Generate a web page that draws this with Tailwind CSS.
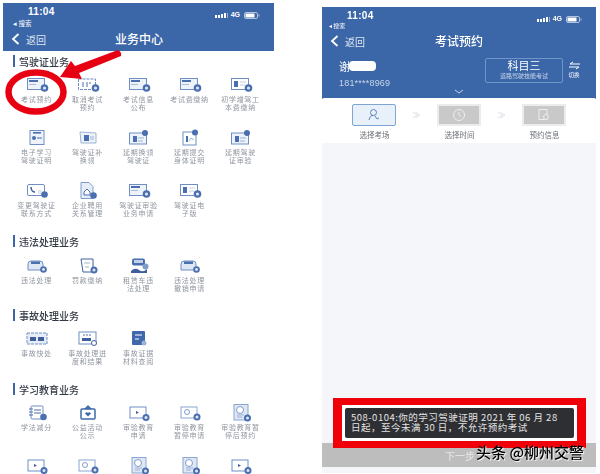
<!DOCTYPE html>
<html lang="zh">
<head>
  <meta charset="UTF-8">
  <title>业务中心</title>
  <script src="https://cdn.jsdelivr.net/npm/@tailwindcss/browser@4"></script>
</head>
<body class="bg-white">
  <svg class="hidden">
    <symbol id="card" viewBox="0 0 24 19"><rect x="2.5" y="2.5" width="17" height="11" fill="#eef3fa" stroke="#6f8fc4"/><rect x="4" y="4" width="9" height="2" fill="#4a6fb0"/><rect x="4" y="8" width="7" height="1" fill="#a9bcdc"/><circle cx="19.5" cy="12" r="3.8" fill="#4a6fb0"/><circle cx="19.5" cy="12" r="1.6" fill="#dfe7f4"/></symbol>
    <symbol id="cal" viewBox="0 0 24 19"><rect x="2.5" y="3" width="17" height="10.5" fill="#fff" stroke="#6f8fc4" stroke-dasharray="3 1"/><path d="M7 6v5M11 6v5M15 7h-2" stroke="#4a6fb0"/><circle cx="19.5" cy="12" r="3.8" fill="#4a6fb0"/><circle cx="19.5" cy="12" r="1.6" fill="#dfe7f4"/></symbol>
    <symbol id="id" viewBox="0 0 24 19"><rect x="2.5" y="2.5" width="17" height="11" fill="#fff" stroke="#6f8fc4"/><rect x="5" y="5" width="4" height="6" fill="#4a6fb0"/><path d="M11 6h6M11 9h5" stroke="#c3d0e6"/><circle cx="19.5" cy="12" r="3.8" fill="#4a6fb0"/><circle cx="19.5" cy="12" r="1.6" fill="#dfe7f4"/></symbol>
    <symbol id="doc" viewBox="0 0 24 19"><rect x="5" y="1.5" width="14" height="14" fill="#eef3fa" stroke="#6f8fc4"/><rect x="8" y="3" width="8" height="1.6" fill="#4a6fb0"/><circle cx="9" cy="9" r="2" fill="#4a6fb0"/><path d="M12 9h5" stroke="#4a6fb0"/></symbol>
    <symbol id="open" viewBox="0 0 24 19"><path d="M4 3l16 1v10H5z" fill="#eef3fa" stroke="#9db3d6"/><rect x="8" y="6" width="5" height="6" fill="#4a6fb0"/><path d="M14 8h4M14 10h4" stroke="#9db3d6"/></symbol>
    <symbol id="idtop" viewBox="0 0 24 19"><rect x="2.5" y="4" width="17" height="11" fill="#eef3fa" stroke="#6f8fc4"/><rect x="6" y="7" width="4" height="6" fill="#4a6fb0"/><path d="M11 9h6M11 12h5" stroke="#9db3d6"/><circle cx="18" cy="4" r="3" fill="#4a6fb0"/></symbol>
    <symbol id="paper" viewBox="0 0 24 19"><rect x="5" y="3" width="13" height="13" fill="#fff" stroke="#6f8fc4"/><rect x="8" y="7" width="2" height="6" fill="#4a6fb0"/><path d="M11 12l2-3 3 2" fill="none" stroke="#9db3d6"/><circle cx="17" cy="3.5" r="3" fill="#4a6fb0"/></symbol>
    <symbol id="phone" viewBox="0 0 24 19"><rect x="2.5" y="2.5" width="17" height="11" rx="1.5" fill="#fff" stroke="#6f8fc4"/><path d="M6 5c0 3 2 5 4 5" fill="none" stroke="#3f5f9c" stroke-width="1.6"/><path d="M13 9h4M13 11h3" stroke="#c3d0e6"/><circle cx="19.5" cy="12.5" r="3.3" fill="#4a6fb0"/></symbol>
    <symbol id="house" viewBox="0 0 24 19"><path d="M5 .5h8l4 4v12H5z" fill="#e6edf7" stroke="#7f9dcb"/><path d="M8 10l3-3 3 3v3H8z" fill="#fff" stroke="#4a6fb0"/><circle cx="17.5" cy="13.5" r="3.3" fill="#4a6fb0"/></symbol>
    <symbol id="car" viewBox="0 0 24 19"><path d="M3 7q0-3 3-3h9q3 0 3 3v6H3z" fill="#dfe7f4" stroke="#6f8fc4"/><rect x="6" y="4.5" width="9" height="2.5" fill="#4a6fb0"/><circle cx="18.5" cy="12.5" r="3.3" fill="#4a6fb0"/><circle cx="18.5" cy="12.5" r="1.4" fill="#dfe7f4"/></symbol>
    <symbol id="bill" viewBox="0 0 24 19"><path d="M5 2h12v13H7z" fill="#fff" stroke="#3f5f9c"/><path d="M8 6h6M9 10h4" stroke="#9db3d6"/><circle cx="18" cy="13" r="3.5" fill="#4a6fb0"/><circle cx="18" cy="13" r="1.5" fill="#dfe7f4"/></symbol>
    <symbol id="taxi" viewBox="0 0 24 19"><rect x="5" y="1.5" width="13" height="7" rx="2" fill="#4a6fb0"/><rect x="7" y="3" width="9" height="3" fill="#c3d0e6"/><path d="M4 14q4-4 8-1t8-1v4H4z" fill="#3f5f9c"/><circle cx="18.5" cy="9.5" r="3" fill="#7f9dcb"/></symbol>
    <symbol id="fast" viewBox="0 0 24 19"><rect x="2" y="3" width="20" height="11" fill="#e6edf7" stroke="#6f8fc4" stroke-dasharray="3 1"/><rect x="5" y="7" width="6" height="4" fill="#3f5f9c"/><rect x="13" y="7" width="6" height="4" fill="#3f5f9c"/></symbol>
    <symbol id="search" viewBox="0 0 24 19"><rect x="3" y="2" width="17" height="12" fill="#fff" stroke="#6f8fc4"/><path d="M7 5h8" stroke="#4a6fb0" stroke-dasharray="2 1"/><rect x="6" y="8" width="9" height="3" fill="#3f5f9c"/><circle cx="18" cy="13" r="2.5" fill="#fff" stroke="#3f5f9c"/></symbol>
    <symbol id="file" viewBox="0 0 24 19"><rect x="5" y="1" width="13" height="14" rx="1" fill="#3f68ad"/><path d="M8 5h7M8 9h4" stroke="#fff"/><circle cx="17" cy="13" r="2.5" fill="#9db3d6"/></symbol>
    <symbol id="note" viewBox="0 0 24 19"><rect x="6" y="2" width="12" height="13" rx="1" fill="#fff" stroke="#6f8fc4"/><path d="M4 5h4M4 8h4M4 11h4M9 6h7M9 9h7" stroke="#4a6fb0"/><circle cx="18.5" cy="13" r="3.3" fill="#4a6fb0"/></symbol>
    <symbol id="heart" viewBox="0 0 24 19"><path d="M12 1l4 4H8z" fill="#4a6fb0"/><rect x="5" y="5" width="14" height="10" rx="1" fill="#fff" stroke="#3f68ad" stroke-width="1.5"/><path d="M12 12.5L9 9.5q1.5-2 3-.5 1.5-1.500 3 .5z" fill="#3f68ad"/></symbol>
    <symbol id="tape" viewBox="0 0 24 19"><rect x="3" y="3" width="16" height="11" fill="#fff" stroke="#8aa5cf"/><circle cx="9" cy="8" r="2.5" fill="none" stroke="#7f9dcb"/><circle cx="19" cy="13" r="3.5" fill="#4a6fb0"/><circle cx="19" cy="13" r="1.5" fill="#dfe7f4"/></symbol>
    <symbol id="disc" viewBox="0 0 24 19"><rect x="5" y="0.5" width="14" height="15.5" fill="#dfe7f4" stroke="#8aa5cf"/><circle cx="11" cy="6" r="3.5" fill="#fff" stroke="#7f9dcb"/><path d="M8 11h7M8 13h5" stroke="#9db3d6"/><circle cx="18.5" cy="14" r="3.5" fill="#4a6fb0"/><circle cx="18.5" cy="14" r="1.5" fill="#dfe7f4"/></symbol>
    <symbol id="play" viewBox="0 0 24 19"><rect x="3" y="3" width="16" height="11" fill="#fff" stroke="#6f8fc4"/><path d="M9 7l3 1.5-3 1.5z" fill="#3f5f9c"/><circle cx="19" cy="13.5" r="3.5" fill="#4a6fb0"/><circle cx="19" cy="13.5" r="1.5" fill="#dfe7f4"/></symbol>
    <symbol id="signal" viewBox="0 0 13 7"><path d="M1 3v3M4 3v3M7 2v4M10 1v5" stroke="white" stroke-width="2"/><path d="M12.500 1v5" stroke="white" stroke-opacity=".5"/></symbol>
    <symbol id="battery" viewBox="0 0 16 7"><rect x=".5" y=".5" width="13" height="6" rx="1.500" fill="none" stroke="white" stroke-opacity=".6"/><rect x="1.500" y="1.500" width="9" height="4" fill="white"/><path d="M15 2.500v2" stroke="white" stroke-opacity=".6"/></symbol>
  </svg>

  <div class="relative flex w-[600px] h-[474px] overflow-hidden blur-[0.6px] font-['Noto_Sans_CJK_SC','Liberation_Sans',sans-serif]">
    <!-- left phone -->
    <div class="w-[271px] ml-[3px] mt-[3px] shrink-0">
      <div class="h-[48px] bg-[#3b67a8] text-white relative">
        <div class="flex justify-between h-[24px] pl-[25px] pr-[14px]">
          <div>
            <p class="text-[10px] leading-[18px] font-bold tracking-[0.3px] font-['Liberation_Sans',sans-serif]">11:04</p>
            <p class="text-[6.5px] leading-[4px] -ml-[15px]">◂ 搜索</p>
          </div>
          <div class="flex items-center gap-[3px] h-[24px]">
            <svg class="w-[13px] h-[7px]"><use href="#signal"/></svg>
            <span class="text-[7px] font-bold font-['Liberation_Sans',sans-serif]">4G</span>
            <svg class="w-[16px] h-[7px] ml-[1px]"><use href="#battery"/></svg>
          </div>
        </div>
        <div class="relative flex items-center h-[24px] pl-[8px]">
          <svg class="w-[9px] h-[12px]" viewBox="0 0 9 12"><path d="M7.500 1L2 6l5.500 5" fill="none" stroke="white" stroke-width="1.800"/></svg>
          <span class="ml-[6px] text-[10px] text-[#dfe6f2]">返回</span>
          <span class="absolute left-[112px] text-[12px] font-medium">业务中心</span>
        </div>
      </div>

      <h2 class="mt-[4px] h-[12px] flex items-center border-l-2 border-[#3b67a8] ml-[10px] pl-[4px] text-[10px] font-medium text-[#333a45]">驾驶证业务</h2>
      <div class="grid grid-cols-[repeat(5,51px)] auto-rows-[53px] mt-[9px] ml-[8px] text-center text-[7px] tracking-[0.7px] leading-[8px] text-[#8f959f]">
        <div class="flex flex-col items-center"><svg class="w-[24px] h-[19px]"><use href="#card"/></svg><p>考试预约</p></div>
        <div class="flex flex-col items-center"><svg class="w-[24px] h-[19px]"><use href="#cal"/></svg><p>取消考试<br>预约</p></div>
        <div class="flex flex-col items-center"><svg class="w-[24px] h-[19px]"><use href="#card"/></svg><p>考试信息<br>公布</p></div>
        <div class="flex flex-col items-center"><svg class="w-[24px] h-[19px]"><use href="#card"/></svg><p>考试费缴纳</p></div>
        <div class="flex flex-col items-center"><svg class="w-[24px] h-[19px]"><use href="#id"/></svg><p>初学增驾工<br>本费缴纳</p></div>
        <div class="flex flex-col items-center"><svg class="w-[24px] h-[19px]"><use href="#doc"/></svg><p>电子学习<br>驾驶证明</p></div>
        <div class="flex flex-col items-center"><svg class="w-[24px] h-[19px]"><use href="#open"/></svg><p>驾驶证补<br>换领</p></div>
        <div class="flex flex-col items-center"><svg class="w-[24px] h-[19px]"><use href="#idtop"/></svg><p>延期换领<br>驾驶证</p></div>
        <div class="flex flex-col items-center"><svg class="w-[24px] h-[19px]"><use href="#paper"/></svg><p>延期提交<br>身体证明</p></div>
        <div class="flex flex-col items-center"><svg class="w-[24px] h-[19px]"><use href="#idtop"/></svg><p>延期驾驶<br>证审验</p></div>
        <div class="flex flex-col items-center"><svg class="w-[24px] h-[19px]"><use href="#phone"/></svg><p>变更驾驶证<br>联系方式</p></div>
        <div class="flex flex-col items-center"><svg class="w-[24px] h-[19px]"><use href="#house"/></svg><p>企业聘用<br>关系管理</p></div>
        <div class="flex flex-col items-center"><svg class="w-[24px] h-[19px]"><use href="#card"/></svg><p>驾驶证审验<br>业务申请</p></div>
        <div class="flex flex-col items-center"><svg class="w-[24px] h-[19px]"><use href="#id"/></svg><p>驾驶证电<br>子版</p></div>
      </div>

      <h2 class="h-[12px] flex items-center border-l-2 border-[#3b67a8] ml-[10px] pl-[4px] text-[10px] font-medium text-[#333a45]">违法处理业务</h2>
      <div class="grid grid-cols-[repeat(5,51px)] auto-rows-[53px] mt-[10px] ml-[8px] text-center text-[7px] tracking-[0.7px] leading-[8px] text-[#8f959f]">
        <div class="flex flex-col items-center"><svg class="w-[24px] h-[19px]"><use href="#car"/></svg><p>违法处理</p></div>
        <div class="flex flex-col items-center"><svg class="w-[24px] h-[19px]"><use href="#bill"/></svg><p>罚款缴纳</p></div>
        <div class="flex flex-col items-center"><svg class="w-[24px] h-[19px]"><use href="#taxi"/></svg><p>租赁车违<br>法处理</p></div>
        <div class="flex flex-col items-center"><svg class="w-[24px] h-[19px]"><use href="#car"/></svg><p>违法处理<br>撤销申请</p></div>
      </div>

      <h2 class="-mt-[1px] h-[12px] flex items-center border-l-2 border-[#3b67a8] ml-[10px] pl-[4px] text-[10px] font-medium text-[#333a45]">事故处理业务</h2>
      <div class="grid grid-cols-[repeat(5,51px)] auto-rows-[53px] mt-[9px] ml-[8px] text-center text-[7px] tracking-[0.7px] leading-[8px] text-[#8f959f]">
        <div class="flex flex-col items-center"><svg class="w-[24px] h-[19px]"><use href="#fast"/></svg><p>事故快处</p></div>
        <div class="flex flex-col items-center"><svg class="w-[24px] h-[19px]"><use href="#search"/></svg><p>事故处理进<br>度和结果</p></div>
        <div class="flex flex-col items-center"><svg class="w-[24px] h-[19px]"><use href="#file"/></svg><p>事故证据<br>材料查阅</p></div>
      </div>

      <h2 class="h-[12px] flex items-center border-l-2 border-[#3b67a8] ml-[10px] pl-[4px] text-[10px] font-medium text-[#333a45]">学习教育业务</h2>
      <div class="grid grid-cols-[repeat(5,51px)] auto-rows-[53px] mt-[9px] ml-[8px] text-center text-[7px] tracking-[0.7px] leading-[8px] text-[#8f959f]">
        <div class="flex flex-col items-center"><svg class="w-[24px] h-[19px]"><use href="#note"/></svg><p>学法减分</p></div>
        <div class="flex flex-col items-center"><svg class="w-[24px] h-[19px]"><use href="#heart"/></svg><p>公益活动<br>公示</p></div>
        <div class="flex flex-col items-center"><svg class="w-[24px] h-[19px]"><use href="#play"/></svg><p>审验教育<br>申请</p></div>
        <div class="flex flex-col items-center"><svg class="w-[24px] h-[19px]"><use href="#tape"/></svg><p>审验教育<br>暂停申请</p></div>
        <div class="flex flex-col items-center"><svg class="w-[24px] h-[19px]"><use href="#disc"/></svg><p>审验教育暂<br>停后预约</p></div>
        <div class="flex flex-col items-center"><svg class="w-[24px] h-[19px]"><use href="#play"/></svg></div>
        <div class="flex flex-col items-center"><svg class="w-[24px] h-[19px]"><use href="#tape"/></svg></div>
        <div class="flex flex-col items-center"><svg class="w-[24px] h-[19px]"><use href="#disc"/></svg></div>
        <div class="flex flex-col items-center"><svg class="w-[24px] h-[19px]"><use href="#disc"/></svg></div>
        <div class="flex flex-col items-center"><svg class="w-[24px] h-[19px]"><use href="#play"/></svg></div>
      </div>
    </div>

    <!-- right phone -->
    <div class="w-[274px] ml-[48px] mt-[7px] shrink-0 flex flex-col h-[466px]">
      <div class="h-[92px] bg-[#3b67a8] text-white shrink-0">
        <div class="flex justify-between h-[20px] pl-[25px] pr-[14px]">
          <div>
            <p class="text-[10px] leading-[17px] font-bold tracking-[0.3px] font-['Liberation_Sans',sans-serif]">11:04</p>
            <p class="text-[6px] leading-[4px] -ml-[18px]">◂ 搜索</p>
          </div>
          <div class="flex items-center gap-[3px] h-[24px]">
            <svg class="w-[13px] h-[7px]"><use href="#signal"/></svg>
            <span class="text-[7px] font-bold font-['Liberation_Sans',sans-serif]">4G</span>
            <svg class="w-[16px] h-[7px] ml-[1px]"><use href="#battery"/></svg>
          </div>
        </div>
        <div class="relative flex items-center h-[28px] pl-[8px]">
          <svg class="w-[9px] h-[12px]" viewBox="0 0 9 12"><path d="M7.500 1L2 6l5.500 5" fill="none" stroke="white" stroke-width="1.800"/></svg>
          <span class="ml-[6px] text-[10px] text-[#dfe6f2]">返回</span>
          <span class="absolute left-[113px] text-[12px] font-medium">考试预约</span>
        </div>
        <div class="flex items-start pl-[17px] pt-[3px] pr-[12px]">
          <div>
            <div class="flex items-center h-[16px]"><span class="text-[11px]">谢</span><span class="ml-[-1px] w-[27px] h-[10px] rounded-[4px] bg-white"></span></div>
            <p class="mt-[4px] text-[9px] leading-[10px] tracking-[0.2px] text-[#c9d6ea] font-['Liberation_Sans',sans-serif]">181****8969</p>
          </div>
          <div class="ml-auto w-[78px] h-[25px] border border-[#6f95c9] rounded-[2px] text-center">
            <p class="text-[11px] leading-[13px]">科目三</p>
            <p class="text-[6px] leading-[8px] text-[#c9d6ea]">道路驾驶技能考试</p>
          </div>
          <div class="w-[20px] ml-[1px] flex flex-col items-center pt-[3px]">
            <svg class="w-[13px] h-[9px]" viewBox="0 0 13 9"><path d="M12 3H2l3-2M1 6h10l-3 2" fill="none" stroke="white"/></svg>
            <span class="text-[5.5px] leading-[10px]">切换</span>
          </div>
        </div>
        <svg class="block mx-auto mt-[1px] w-[10px] h-[5px]" viewBox="0 0 10 5"><path d="M1 1l4 3 4-3" fill="none" stroke="#c9d6ea"/></svg>
      </div>

      <div class="h-[45px] shrink-0 bg-white rounded-t-[2px] -mt-[1px]">
        <div class="flex items-center pl-[30px] pt-[6px]">
          <div class="w-[44px] h-[22px] bg-[#e8f1fa] border border-[#7ea5d3] rounded-[2px] flex items-center justify-center">
            <svg class="w-[14px] h-[14px]" viewBox="0 0 14 14"><circle cx="6.500" cy="4.500" r="3" fill="none" stroke="#5f83b8"/><path d="M2 12q1-5 4.500-4.500M8 8l2 3 2-1" fill="none" stroke="#5f83b8"/></svg>
          </div>
          <span class="w-[41px] text-center text-[8px] text-[#cfd5de]">≫</span>
          <div class="w-[44px] h-[22px] bg-[#c9c9c9] border-2 border-[#ececec] flex items-center justify-center">
            <svg class="w-[14px] h-[14px]" viewBox="0 0 14 14"><circle cx="7" cy="7" r="5.500" fill="none" stroke="#eee"/><path d="M7 4v3l2 2" fill="none" stroke="#eee"/></svg>
          </div>
          <span class="w-[41px] text-center text-[8px] text-[#cfd5de]">≫</span>
          <div class="w-[44px] h-[22px] bg-[#c9c9c9] border-2 border-[#ececec] flex items-center justify-center">
            <svg class="w-[14px] h-[14px]" viewBox="0 0 14 14"><rect x="2" y="1.500" width="8" height="10" fill="none" stroke="#eee"/><circle cx="9" cy="9" r="2.500" fill="#c9c9c9" stroke="#eee"/></svg>
          </div>
        </div>
        <div class="grid grid-cols-[85px_85px_85px] pl-[10px] mt-[4px] text-center text-[7.5px] leading-[10px] text-[#6b7078]">
          <span>选择考场</span><span>选择时间</span><span>预约信息</span>
        </div>
      </div>

      <div class="flex-1 bg-[#f5f6f9]"></div>
      <div class="h-[24px] shrink-0 bg-[#bdbdbd] text-[#e8e8e8] text-[10px] leading-[26px] text-center"><span class="mr-[-2px]">下一步</span></div>
      <div class="h-[6px] shrink-0 bg-[#f5f6f9]"></div>
    </div>

    <!-- red annotations -->
    <svg class="absolute left-0 top-0 w-[130px] h-[120px]" viewBox="0 0 130 120">
      <ellipse cx="36" cy="92" rx="27.500" ry="19.500" fill="none" stroke="#e60012" stroke-width="6.500"/>
      <path d="M60 77L71 61L75 66L118 50Q122 52 121 56L79 73L82 79Z" fill="#e60012"/>
    </svg>
    <div class="absolute left-[333px] top-[398px] w-[253px] h-[50px] border-y-[7px] border-x-[9px] border-[#f00008] bg-white p-[3px]">
      <div class="h-full bg-[#2e2f33] rounded-[2px] px-[6px] pt-[4px] text-[9.5px] leading-[10px] tracking-[0.5px] text-[#e4e4e4] whitespace-nowrap">
        <p>508-0104:你的学习驾驶证明 2021 年 06 月 28</p>
        <p>日起，至今未满 30 日，不允许预约考试</p>
      </div>
    </div>
    <p class="absolute left-[476px] top-[442px] text-[15px] leading-[20px] font-medium text-black [text-shadow:1px_1px_1px_#fff] whitespace-nowrap">头条 @柳州交警</p>
  </div>
</body>
</html>
